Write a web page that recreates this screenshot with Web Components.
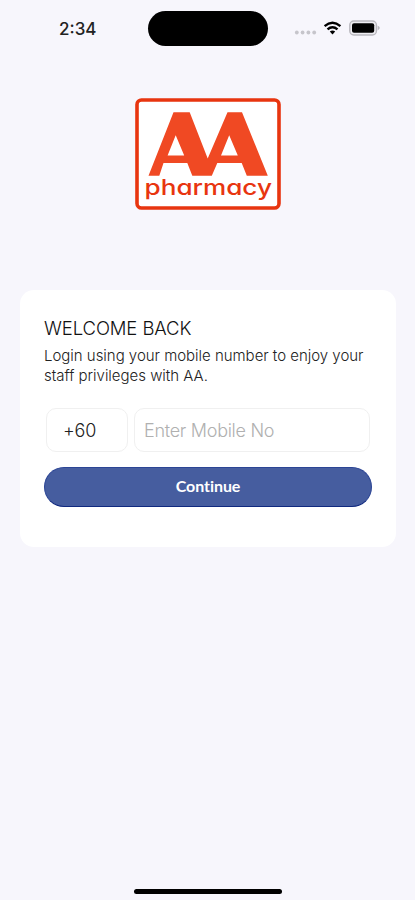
<!DOCTYPE html>
<html lang="en">
<head>
<meta charset="utf-8">
<title>AA Pharmacy - Login</title>
<style>
    body {
        margin: 0;
        background: #f7f6fc;
        font-family: Inter, "Liberation Sans", sans-serif;
        color: #222;
    }
</style>
</head>
<body>
<app-screen>
    <status-bar slot="top" time="2:34"></status-bar>
    <brand-logo name="pharmacy"></brand-logo>
    <login-card>
        <span slot="title">WELCOME BACK</span>
        <span slot="text">Login using your mobile number to enjoy your<br>staff privileges with AA.</span>
        <phone-field code="+60" placeholder="Enter Mobile No"></phone-field>
        <pill-button>Continue</pill-button>
    </login-card>
</app-screen>

<script>
class AppScreen extends HTMLElement {
    constructor() {
        super();
        this.attachShadow({ mode: "open" });

        this.shadowRoot.innerHTML = `
            <style>
                :host {
                    display: flex;
                    flex-direction: column;
                    height: 900px;
                    overflow: hidden;
                }
                main {
                    flex: 1;
                    display: flex;
                    flex-direction: column;
                    align-items: center;
                    gap: 80px;
                    padding: 41px 19px 0 20px;
                }
                .home {
                    align-self: center;
                    width: 148px;
                    height: 5px;
                    margin-bottom: 6px;
                    border-radius: 3px;
                    background: #000;
                }
            </style>
            <slot name="top"></slot>
            <main><slot></slot></main>
            <div class="home"></div>
        `;
    }
}

class StatusBar extends HTMLElement {
    constructor() {
        super();
        this.attachShadow({ mode: "open" });

        this.shadowRoot.innerHTML = `
            <style>
                :host {
                    display: grid;
                    grid-template-columns: 148px 120px 1fr;
                    align-items: center;
                    height: 35px;
                    padding-top: 11px;
                    margin-bottom: 11px;
                }
                time {
                    padding-left: 59px;
                    font-size: 17px;
                    font-weight: 500;
                    color: #222;
                }
                .island {
                    height: 35px;
                    border-radius: 18px;
                    background: #000;
                }
                svg {
                    display: block;
                    margin-left: 26px;
                }
            </style>
            <time></time>
            <div class="island"></div>
            <svg width="88" height="20" viewBox="0 0 88 20">
                <g fill="#c6c5cb">
                    <circle cx="2.8" cy="13.5" r="1.9"/>
                    <circle cx="8.6" cy="13.5" r="1.9"/>
                    <circle cx="14.4" cy="13.5" r="1.9"/>
                    <circle cx="20.2" cy="13.5" r="1.9"/>
                </g>
                <g fill="none" stroke="#000" stroke-width="2.4">
                    <path d="M30.6 7.1 Q38.5 0.4 46.4 7.1"/>
                    <path d="M33.5 10.3 Q38.5 6 43.5 10.3"/>
                </g>
                <path d="M35.8 12.4 Q38.5 10.4 41.2 12.4 L38.5 15.4 Z"/>
                <rect x="55.8" y="2" width="26.6" height="14" rx="4" fill="#eeedf2" stroke="#b9b8be" stroke-width="1.4"/>
                <rect x="58" y="4.2" width="22.2" height="9.6" rx="2"/>
                <path d="M83.6 6.6 Q88 9 83.6 11.4 Z" fill="#b9b8be"/>
            </svg>
        `;
    }

    static get observedAttributes() {
        return ["time"];
    }

    attributeChangedCallback(name, oldValue, newValue) {
        this.shadowRoot.querySelector("time").textContent = newValue;
    }
}

class BrandLogo extends HTMLElement {
    constructor() {
        super();
        this.attachShadow({ mode: "open" });

        this.shadowRoot.innerHTML = `
            <style>
                :host {
                    display: block;
                    width: 146px;
                    height: 112px;
                }
                svg {
                    display: block;
                }
                text {
                    font-size: 22px;
                    font-weight: 500;
                    font-feature-settings: "cv11" 1;
                }
            </style>
            <svg width="146" height="112" viewBox="0 0 146 112">
                <rect x="2" y="2" width="142" height="108" rx="4.5" fill="#fff" stroke="#e8350f" stroke-width="3.6"/>
                <path fill="#f04923" fill-rule="evenodd" d="M13.5 77.7 L38.5 14.3 H54.7 L72.7 60.5 L92.5 14.3 H107 L132.8 77.7 H111.8 L106.7 65 H82.3 L76.8 77.7 H57.3 L52.3 65 H28.5 L24.3 77.7 Z M40.7 37.2 L32.6 57.6 H49.2 Z M94.2 37.2 L86 57.6 H102.8 Z"/>
                <text x="9.5" y="97.2" textLength="127.5" lengthAdjust="spacingAndGlyphs" fill="#e8350f"></text>
            </svg>
        `;
    }

    static get observedAttributes() {
        return ["name"];
    }

    attributeChangedCallback(name, oldValue, newValue) {
        this.shadowRoot.querySelector("text").textContent = newValue;
    }
}

class LoginCard extends HTMLElement {
    constructor() {
        super();
        this.attachShadow({ mode: "open" });

        this.shadowRoot.innerHTML = `
            <style>
                :host {
                    display: block;
                    align-self: stretch;
                    box-sizing: border-box;
                    height: 257px;
                    padding: 26px 24px 0;
                    border-radius: 14px;
                    background: #fff;
                }
                h1 {
                    margin: 0;
                    font-size: 18.5px;
                    font-weight: 300;
                    line-height: 25px;
                    letter-spacing: -0.1px;
                    color: #111;
                }
                p {
                    margin: 5px 0 21px;
                    font-size: 15px;
                    font-weight: 300;
                    line-height: 20.4px;
                    letter-spacing: -0.02px;
                    white-space: nowrap;
                }
                .form {
                    display: flex;
                    flex-direction: column;
                    gap: 15px;
                }
            </style>
            <h1><slot name="title"></slot></h1>
            <p><slot name="text"></slot></p>
            <div class="form"><slot></slot></div>
        `;
    }
}

class PhoneField extends HTMLElement {
    constructor() {
        super();
        this.attachShadow({ mode: "open" });

        this.shadowRoot.innerHTML = `
            <style>
                :host {
                    display: grid;
                    grid-template-columns: 82px 1fr;
                    gap: 6px;
                    padding: 0 2px;
                    font-size: 18px;
                    font-weight: 300;
                }
                div {
                    box-sizing: border-box;
                    height: 44px;
                    line-height: 43px;
                    border: 1px solid #f0f0f0;
                    border-radius: 10px;
                }
                .code {
                    padding-left: 16px;
                    letter-spacing: -0.2px;
                }
                .number {
                    padding-left: 9px;
                    letter-spacing: -0.28px;
                    color: #b0b0b0;
                }
            </style>
            <div class="code"></div>
            <div class="number"></div>
        `;
    }

    static get observedAttributes() {
        return ["code", "placeholder"];
    }

    attributeChangedCallback(name, oldValue, newValue) {
        if (name === "code") this.shadowRoot.querySelector(".code").textContent = newValue;
        if (name === "placeholder") this.shadowRoot.querySelector(".number").textContent = newValue;
    }
}

class PillButton extends HTMLElement {
    constructor() {
        super();
        this.attachShadow({ mode: "open" });

        this.shadowRoot.innerHTML = `
            <style>
                :host {
                    display: block;
                }
                button {
                    display: block;
                    width: 100%;
                    height: 40px;
                    padding: 0 0 2px;
                    border: 1px solid #2c4595;
                    border-bottom-color: #10297f;
                    border-radius: 20px;
                    background: #465d9f;
                    color: #fff;
                    font: 700 16px Lato, "Liberation Sans", sans-serif;
                    font-variant-ligatures: none;
                    letter-spacing: -0.05px;
                }
            </style>
            <button><slot></slot></button>
        `;
    }
}

customElements.define("app-screen", AppScreen);
customElements.define("status-bar", StatusBar);
customElements.define("brand-logo", BrandLogo);
customElements.define("login-card", LoginCard);
customElements.define("phone-field", PhoneField);
customElements.define("pill-button", PillButton);
</script>
</body>
</html>
